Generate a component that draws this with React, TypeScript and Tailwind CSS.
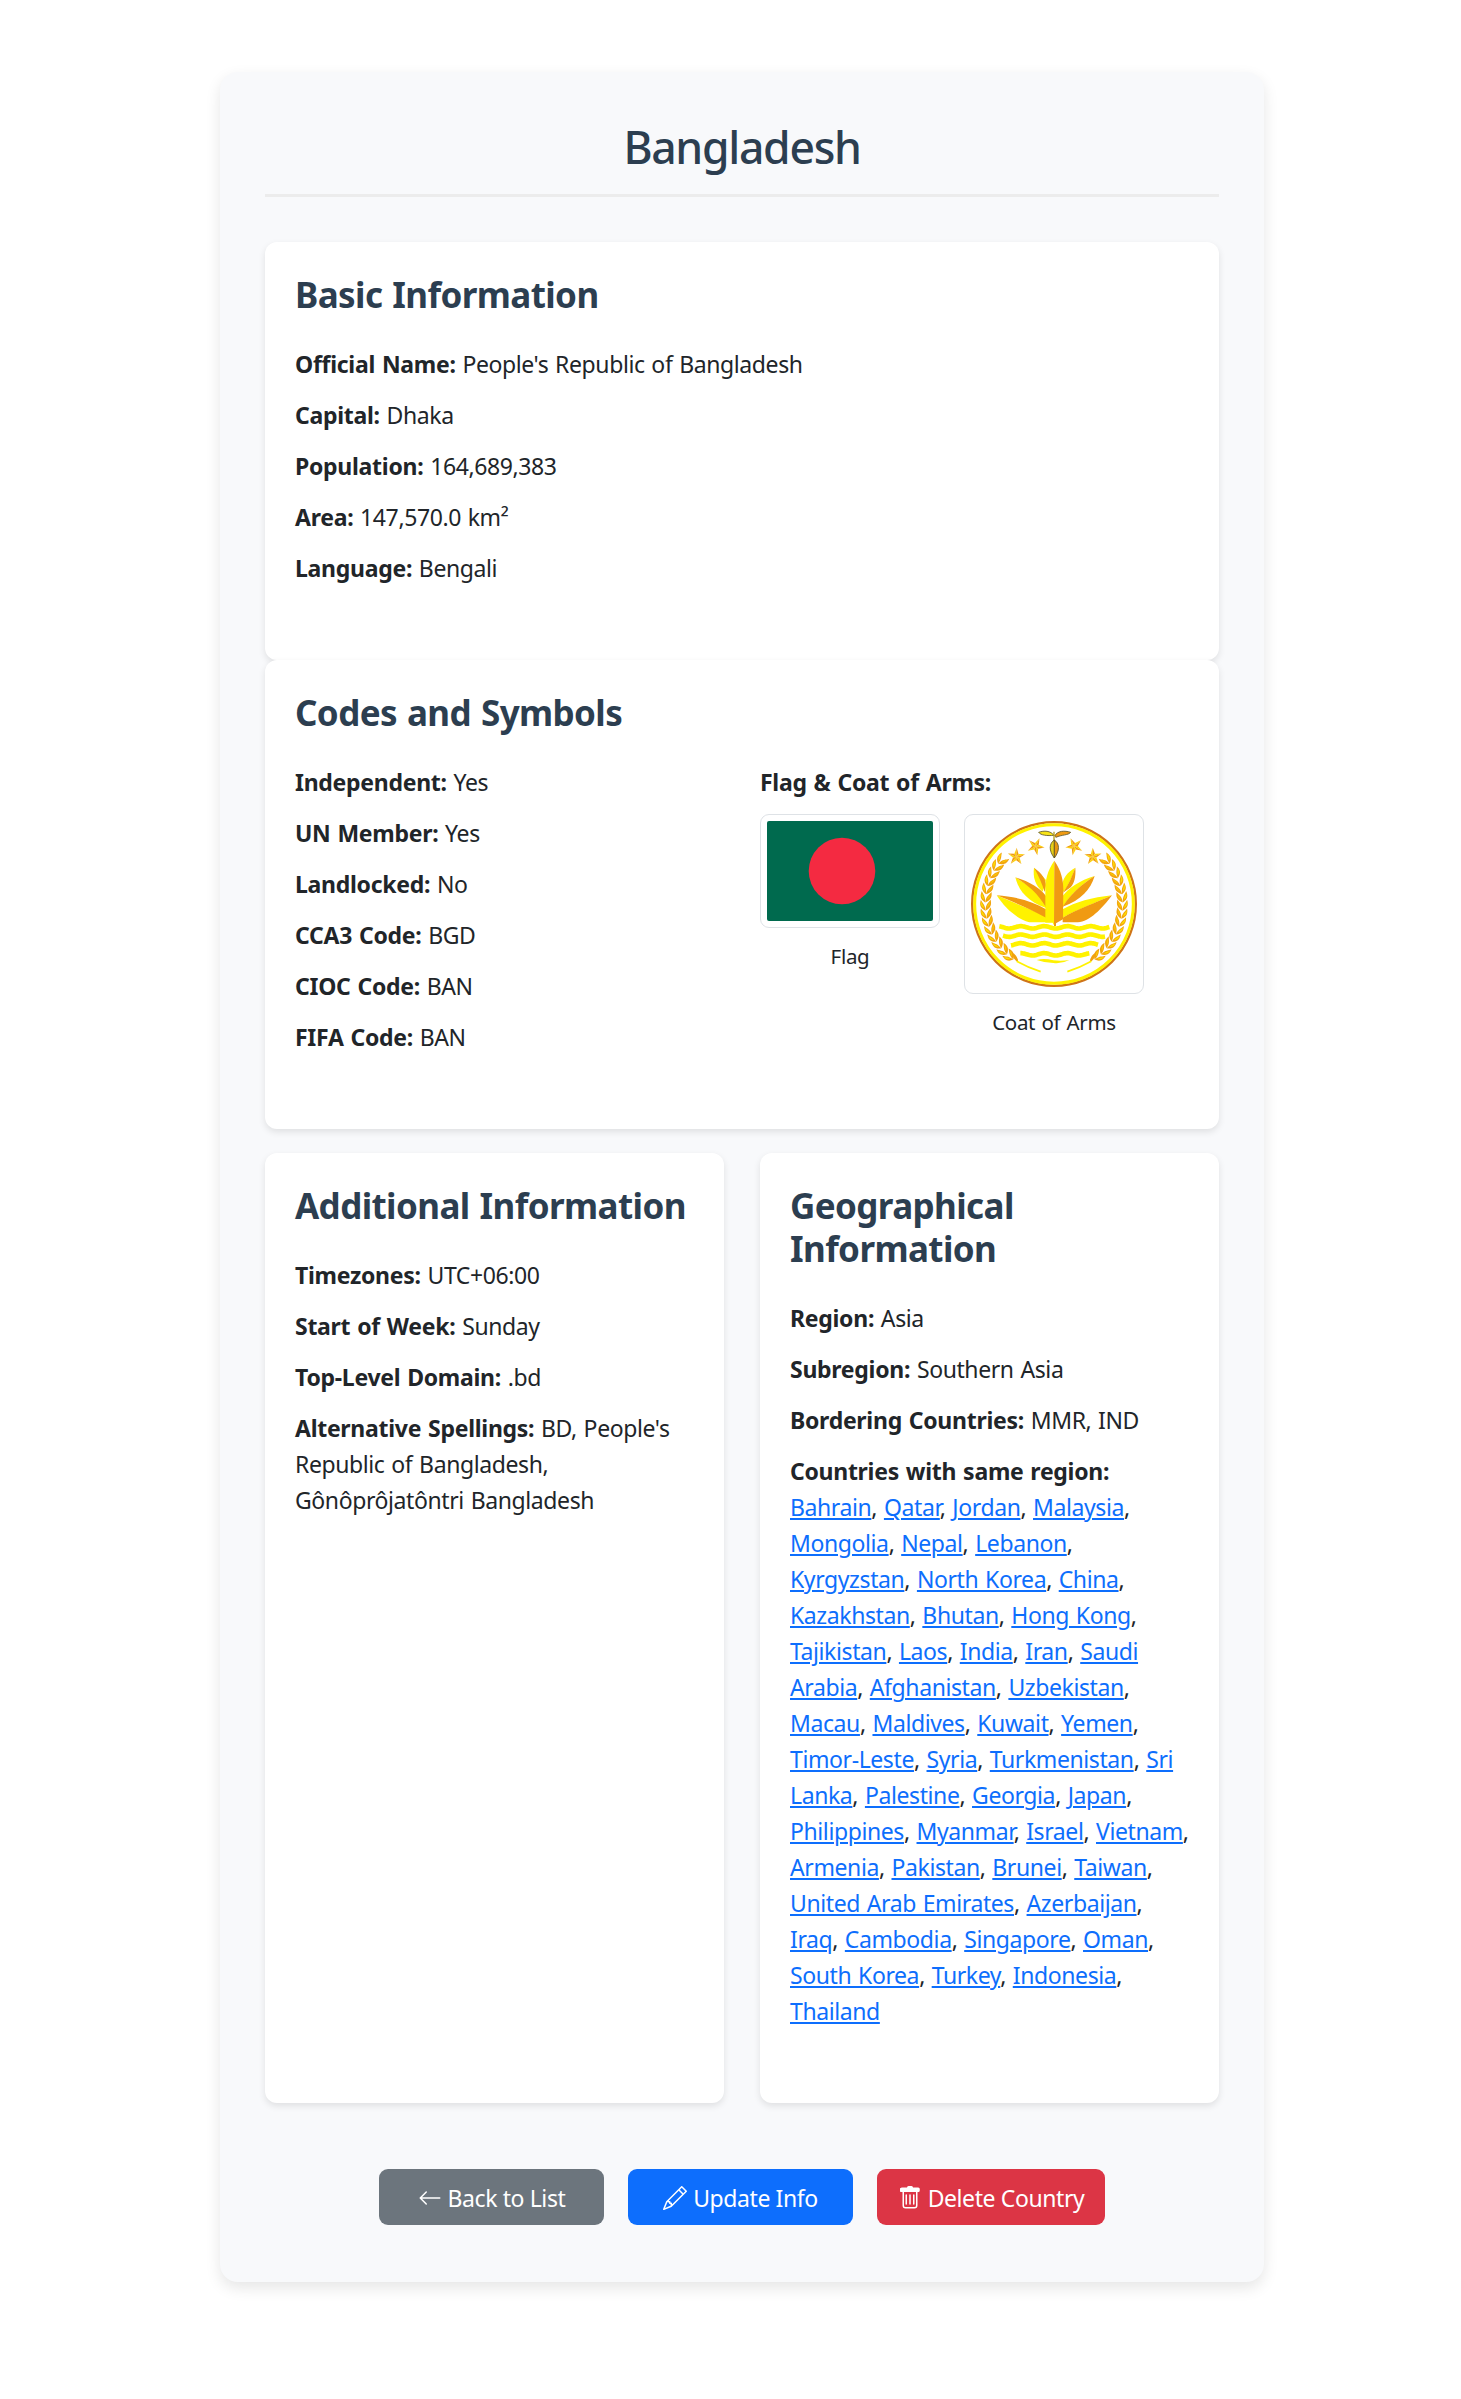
import React from "react";
import { BsArrowLeft, BsPencil, BsTrash } from "react-icons/bs";

const CARD = "rounded-xl bg-white px-[30px] pt-[31px] shadow-[0_3px_7.5px_rgba(0,0,0,0.1)]";

function Heading({ children }: { children: React.ReactNode }) {
  return (
    <h2 className="mb-[28.8px] whitespace-nowrap text-[35px] font-bold leading-[43.2px] tracking-[-0.6px] text-[#2c3e50] [word-spacing:1.5px]">
      {children}
    </h2>
  );
}

function Fact({ label, children }: { label: string; children?: React.ReactNode }) {
  return (
    <p className="mb-[15px] translate-y-px whitespace-nowrap">
      <strong className="font-bold tracking-[-0.28px]">{label}:</strong> {children}
    </p>
  );
}

const neighbours: string[][] = [
  ["Bahrain", "Qatar", "Jordan", "Malaysia"],
  ["Mongolia", "Nepal", "Lebanon"],
  ["Kyrgyzstan", "North Korea", "China"],
  ["Kazakhstan", "Bhutan", "Hong Kong"],
  ["Tajikistan", "Laos", "India", "Iran", "Saudi~"],
  ["Arabia", "Afghanistan", "Uzbekistan"],
  ["Macau", "Maldives", "Kuwait", "Yemen"],
  ["Timor-Leste", "Syria", "Turkmenistan", "Sri~"],
  ["Lanka", "Palestine", "Georgia", "Japan"],
  ["Philippines", "Myanmar", "Israel", "Vietnam"],
  ["Armenia", "Pakistan", "Brunei", "Taiwan"],
  ["United Arab Emirates", "Azerbaijan"],
  ["Iraq", "Cambodia", "Singapore", "Oman"],
  ["South Korea", "Turkey", "Indonesia"],
  ["Thailand"],
];

function Star({ x, y, turn }: { x: number; y: number; turn: number }) {
  const at = (r: number, deg: number) => {
    const a = (deg * Math.PI) / 180;
    return `${(r * Math.sin(a)).toFixed(1)},${(-r * Math.cos(a)).toFixed(1)}`;
  };
  return (
    <g transform={`translate(${x} ${y}) rotate(${turn})`}>
      {[0, 72, 144, 216, 288].map((d) => (
        <g key={d}>
          <polygon points={`0,0 ${at(27, d)} ${at(10.5, d - 36)}`} fill="#fcd406" />
          <polygon points={`0,0 ${at(27, d)} ${at(10.5, d + 36)}`} fill="#ef9a12" />
        </g>
      ))}
    </g>
  );
}

function Wheat() {
  return (
    <>
      {Array.from({ length: 14 }, (_, i) => {
        const deg = 220 - i * 6.9;
        const a = (deg * Math.PI) / 180;
        const x = 342 + 206 * Math.cos(a);
        const y = 312 + 206 * Math.sin(a);
        return (
          <g key={i} transform={`translate(${x.toFixed(1)} ${y.toFixed(1)}) rotate(${(deg - 180).toFixed(1)})`}>
            <path d="M0 15 C-18 6 -17 -6 -13 -18 C-9 -8 -1 -5 0 15Z" fill="#f2a50f" />
            <path d="M0 15 C18 6 19 -4 16 -18 C10 -8 1 -5 0 15Z" fill="#f2a50f" />
            <path d="M-4 7 C-14 1 -14 -6 -12 -13 C-10 -5 -5 0 -4 7Z" fill="#fde000" />
            <path d="M4 6 C12 1 14 -5 14 -12 C10 -5 6 -1 4 6Z" fill="#fbcb05" />
          </g>
        );
      })}
      <path d="M216 458 Q232 464 235 486 Q221 482 216 458Z" fill="#f0a010" />
      <path d="M230 484 Q262 502 302 515" fill="none" stroke="#fff200" strokeWidth="5" />
    </>
  );
}

function Wave({ x1, x2, y }: { x1: number; x2: number; y: number }) {
  const pts: string[] = [];
  for (let x = x1; x <= x2; x += 3) {
    pts.push(`${x},${(y + 3.5 * Math.sin(((x - 190) / 70) * 2 * Math.PI)).toFixed(1)}`);
  }
  return <polyline points={pts.join(" ")} fill="none" stroke="#fff200" strokeWidth="14" />;
}

function CoatOfArms() {
  return (
    <svg viewBox="93 63 498 498" className="block h-[166px] w-[166px]">
      <circle cx="342" cy="312" r="245.5" fill="#fff" stroke="#cf7418" strokeWidth="7" />
      <circle cx="342" cy="312" r="238" fill="none" stroke="#fff200" strokeWidth="9" />
      <Wheat />
      <g transform="translate(684 0) scale(-1 1)">
        <Wheat />
      </g>
      <Star x={229} y={170} turn={2} />
      <Star x={287} y={139} turn={25} />
      <Star x={403} y={139} turn={-25} />
      <Star x={459} y={170} turn={-2} />
      <path d="M342 106 C332 92 312 91 296 97 C302 106 322 108 342 106Z" fill="#f7e316" stroke="#5b5325" strokeWidth="2.5" />
      <path d="M344 108 C352 92 374 91 392 97 C386 106 364 104 348 112Z" fill="#f09a12" stroke="#5b5325" strokeWidth="2.5" />
      <path d="M342 95 V122" stroke="#b5a020" strokeWidth="4" />
      <path d="M343 120 C327 130 326 152 343 174Z" fill="#e6cf16" stroke="#5b5325" strokeWidth="2.5" />
      <path d="M343 120 C359 130 360 152 343 174Z" fill="#e8960f" stroke="#5b5325" strokeWidth="2.5" />
      {/* left petals, back to front */}
      <path d="M282 203 C278 232 286 256 308 275 L318 240 Z" fill="#fff200" />
      <path d="M282 203 C306 220 318 238 318 258 L314 276 C306 250 296 228 282 203Z" fill="#f09a12" />
      <path d="M226 232 C236 272 262 304 318 324 L318 290 Z" fill="#fff200" />
      <path d="M226 232 C268 244 302 266 318 288 V322 C294 280 262 254 226 232Z" fill="#f09a12" />
      <path d="M170 286 C196 326 230 356 268 367 H318 V348 Z" fill="#fff200" />
      <path d="M170 286 C228 290 280 304 318 328 V353 C268 326 222 306 170 286Z" fill="#f09a12" />
      {/* right petals */}
      <path d="M406 203 C382 216 366 236 366 262 L370 276 C388 252 396 230 406 203Z" fill="#fff200" />
      <path d="M406 203 C408 232 402 250 392 262 L369 278 C388 250 396 228 406 203Z" fill="#f09a12" />
      <path d="M464 228 C420 240 384 266 368 288 V322 C392 282 424 254 464 228Z" fill="#fff200" />
      <path d="M464 228 C452 268 424 300 368 320 C390 284 424 254 464 228Z" fill="#f09a12" />
      <path d="M516 286 C456 292 406 306 368 328 V353 C420 326 468 308 516 286Z" fill="#fff200" />
      <path d="M516 286 C486 326 448 366 414 367 H368 V353 C416 326 468 308 516 286Z" fill="#f09a12" />
      <path d="M343 182 C322 212 316 240 316 270 V368 H338 L343 378Z" fill="#fff200" />
      <path d="M343 182 C364 212 370 240 370 270 L369 358 L348 370 V378 H342Z" fill="#f09a12" />
      <Wave x1={178} x2={509} y={382} />
      <Wave x1={189} x2={497} y={407} />
      <Wave x1={213} x2={474} y={433} />
      <Wave x1={241} x2={448} y={463} />
      <path d="M290 480 Q312 474 340 481 Q364 484 388 480 Q366 492 340 489 Q312 488 290 480Z" fill="#fff200" />
    </svg>
  );
}

const BTN =
  "flex h-14 items-center justify-center gap-[6px] whitespace-nowrap rounded-[9px] pt-px text-white";

export default function App() {
  return (
    <div className="h-[2399px] bg-white pt-[72px] font-['Noto_Sans','Segoe_UI',sans-serif] text-[23px] leading-[36px] tracking-[-0.4px] text-[#212529] [word-spacing:1.2px]">
      <main className="ml-[220px] flex h-[2210px] w-[1044px] flex-col rounded-[18px] bg-[#f8f9fb] px-[45px] shadow-[0_6px_15px_rgba(0,0,0,0.1)]">
        <h1 className="mb-[45px] h-[125px] border-b-[3px] border-[#ececec] pt-[46px] text-center text-[44.5px] font-medium leading-[58px] tracking-[-1.3px] text-[#2c3e50]">
          Bangladesh
        </h1>

        <section className={`${CARD} h-[418px]`}>
          <Heading>Basic Information</Heading>
          <Fact label="Official Name">People's Republic of Bangladesh</Fact>
          <Fact label="Capital">Dhaka</Fact>
          <Fact label="Population">164,689,383</Fact>
          <Fact label="Area">147,570.0 km²</Fact>
          <Fact label="Language">Bengali</Fact>
        </section>

        <section className={`${CARD} h-[469px]`}>
          <Heading>Codes and Symbols</Heading>
          <div className="flex">
            <div className="w-[465px]">
              <Fact label="Independent">Yes</Fact>
              <Fact label="UN Member">Yes</Fact>
              <Fact label="Landlocked">No</Fact>
              <Fact label="CCA3 Code">BGD</Fact>
              <Fact label="CIOC Code">BAN</Fact>
              <Fact label="FIFA Code">BAN</Fact>
            </div>
            <div>
              <Fact label="Flag & Coat of Arms" />
              <div className="flex items-start gap-6 text-center text-[20.5px] leading-[30px] tracking-[-0.3px]">
                <figure className="w-[180px]">
                  <div className="mb-[13px] rounded-[9px] border border-[#dee2e6] p-[6px]">
                    <svg viewBox="0 0 166 100" className="block h-[100px] w-[166px] rounded-[2px]">
                      <rect width="166" height="100" fill="#006a4e" />
                      <circle cx="75" cy="50" r="33.3" fill="#f42a41" />
                    </svg>
                  </div>
                  <figcaption>Flag</figcaption>
                </figure>
                <figure className="w-[180px]">
                  <div className="mb-[13px] rounded-[9px] border border-[#dee2e6] p-[6px]">
                    <CoatOfArms />
                  </div>
                  <figcaption>Coat of Arms</figcaption>
                </figure>
              </div>
            </div>
          </div>
        </section>

        <div className="mt-6 flex h-[950px] gap-9">
          <section className={`${CARD} w-[459px]`}>
            <Heading>Additional Information</Heading>
            <Fact label="Timezones">UTC+06:00</Fact>
            <Fact label="Start of Week">Sunday</Fact>
            <Fact label="Top-Level Domain">.bd</Fact>
            <Fact label="Alternative Spellings">
              BD, People's
              <br />
              Republic of Bangladesh,
              <br />
              Gônôprôjatôntri Bangladesh
            </Fact>
          </section>
          <section className={`${CARD} w-[459px]`}>
            <Heading>
              Geographical
              <br />
              Information
            </Heading>
            <Fact label="Region">Asia</Fact>
            <Fact label="Subregion">Southern Asia</Fact>
            <Fact label="Bordering Countries">MMR, IND</Fact>
            <Fact label="Countries with same region">
              {neighbours.map((row, r) => (
                <React.Fragment key={r}>
                  <br />
                  {row.map((name, i) => {
                    const open = name.endsWith("~");
                    const last = r === neighbours.length - 1;
                    return (
                      <React.Fragment key={name}>
                        <a href="#" className="text-[#0d6efd] underline decoration-2 underline-offset-[2px]">
                          {name.replace("~", "")}
                        </a>
                        {open || last ? "" : i < row.length - 1 ? ", " : ","}
                      </React.Fragment>
                    );
                  })}
                </React.Fragment>
              ))}
            </Fact>
          </section>
        </div>

        <div className="mt-[66px] flex gap-6 pl-[114px]">
          <button className={`${BTN} w-[225px] bg-[#6c757d]`}>
            <BsArrowLeft className="size-6" />
            Back to List
          </button>
          <button className={`${BTN} w-[225px] bg-[#0d6efd]`}>
            <BsPencil className="size-6" />
            Update Info
          </button>
          <button className={`${BTN} w-[228px] bg-[#dc3545]`}>
            <span className="flex flex-col items-center">
              <BsTrash className="size-6" />
              <span className="-mt-[22px] mb-[18px] h-1 w-[19px] rounded-[1px] bg-white" />
            </span>
            Delete Country
          </button>
        </div>
      </main>
    </div>
  );
}
